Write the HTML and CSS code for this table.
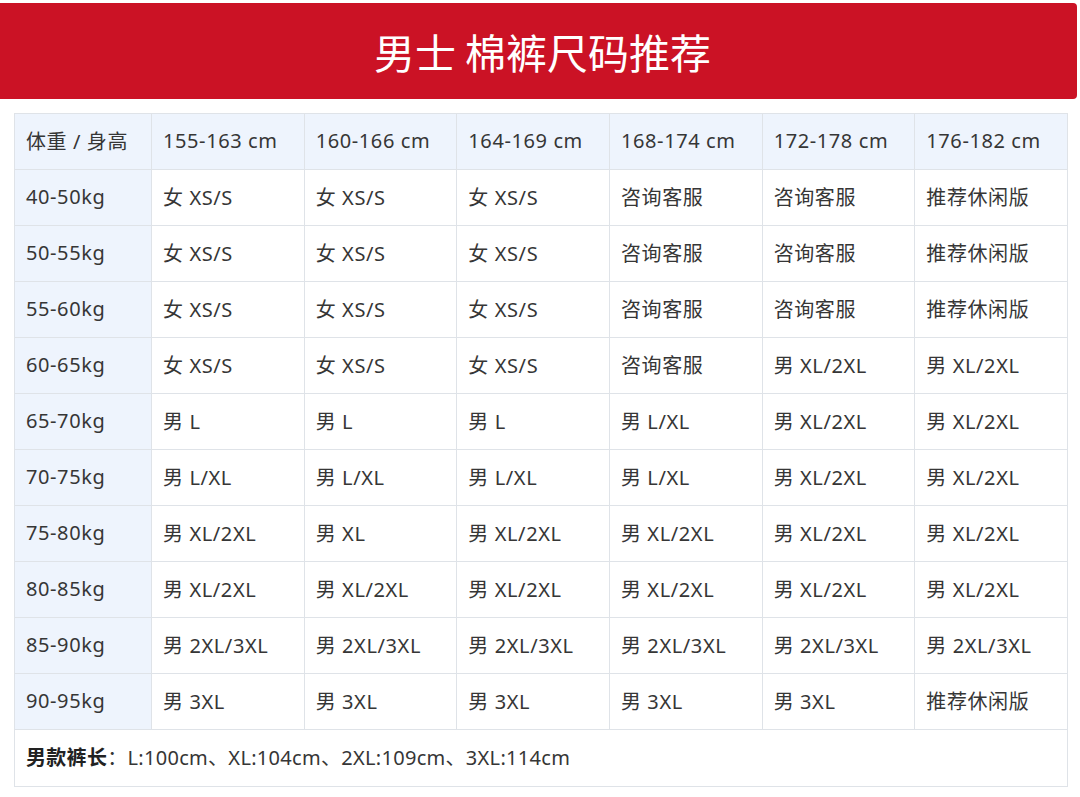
FILE: index.html
```html
<!DOCTYPE html>
<html lang="zh">
<head>
<meta charset="utf-8">
<title>男士 棉裤尺码推荐</title>
<link rel="stylesheet" href="styles.css">
</head>
<body>
<header class="banner"><h1 class="banner-title">男士 棉裤尺码推荐</h1></header>
<div class="table-wrap">
<table class="size-table">
<colgroup><col class="col-first"><col><col><col><col><col><col></colgroup>
<thead>
<tr><th class="first">体重 / 身高</th><th>155-163 cm</th><th>160-166 cm</th><th>164-169 cm</th><th>168-174 cm</th><th>172-178 cm</th><th>176-182 cm</th></tr>
</thead>
<tbody>
<tr><th class="first">40-50kg</th><td>女 XS/S</td><td>女 XS/S</td><td>女 XS/S</td><td>咨询客服</td><td>咨询客服</td><td>推荐休闲版</td></tr>
<tr><th class="first">50-55kg</th><td>女 XS/S</td><td>女 XS/S</td><td>女 XS/S</td><td>咨询客服</td><td>咨询客服</td><td>推荐休闲版</td></tr>
<tr><th class="first">55-60kg</th><td>女 XS/S</td><td>女 XS/S</td><td>女 XS/S</td><td>咨询客服</td><td>咨询客服</td><td>推荐休闲版</td></tr>
<tr><th class="first">60-65kg</th><td>女 XS/S</td><td>女 XS/S</td><td>女 XS/S</td><td>咨询客服</td><td>男 XL/2XL</td><td>男 XL/2XL</td></tr>
<tr><th class="first">65-70kg</th><td>男 L</td><td>男 L</td><td>男 L</td><td>男 L/XL</td><td>男 XL/2XL</td><td>男 XL/2XL</td></tr>
<tr><th class="first">70-75kg</th><td>男 L/XL</td><td>男 L/XL</td><td>男 L/XL</td><td>男 L/XL</td><td>男 XL/2XL</td><td>男 XL/2XL</td></tr>
<tr><th class="first">75-80kg</th><td>男 XL/2XL</td><td>男 XL</td><td>男 XL/2XL</td><td>男 XL/2XL</td><td>男 XL/2XL</td><td>男 XL/2XL</td></tr>
<tr><th class="first">80-85kg</th><td>男 XL/2XL</td><td>男 XL/2XL</td><td>男 XL/2XL</td><td>男 XL/2XL</td><td>男 XL/2XL</td><td>男 XL/2XL</td></tr>
<tr><th class="first">85-90kg</th><td>男 2XL/3XL</td><td>男 2XL/3XL</td><td>男 2XL/3XL</td><td>男 2XL/3XL</td><td>男 2XL/3XL</td><td>男 2XL/3XL</td></tr>
<tr><th class="first">90-95kg</th><td>男 3XL</td><td>男 3XL</td><td>男 3XL</td><td>男 3XL</td><td>男 3XL</td><td>推荐休闲版</td></tr>
</tbody>
<tfoot>
<tr><td class="note" colspan="7"><strong>男款裤长</strong>：L:100cm、XL:104cm、2XL:109cm、3XL:114cm</td></tr>
</tfoot>
</table>
</div>
</body>
</html>
```

FILE: styles.css
```css
html, body {
  margin: 0;
  padding: 0;
  background: #ffffff;
}
body {
  font-family: "Noto Sans", "Noto Sans CJK SC", sans-serif;
  color: #363636;
}
.banner {
  margin-top: 3px;
  width: 1077px;
  height: 96px;
  background: #cb1225;
  border-radius: 0 4px 4px 0;
  display: flex;
  align-items: center;
  justify-content: center;
  padding-left: 8px;
  box-sizing: border-box;
}
.banner-title {
  margin: 0;
  color: #ffffff;
  font-family: "Noto Sans CJK SC", sans-serif;
  font-weight: 400;
  font-size: 41px;
  line-height: 1;
}
.table-wrap {
  margin: 14px 0 0 14px;
  width: 1054px;
}
.size-table {
  width: 1054px;
  table-layout: fixed;
  border-collapse: collapse;
  font-size: 20px;
  letter-spacing: 0.6px;
}
.col-first {
  width: 137px;
}
.size-table th,
.size-table td {
  border: 1px solid #dfe3e8;
  height: 56px;
  padding: 0 0 2px 11px;
  text-align: left;
  font-weight: 400;
  vertical-align: middle;
  white-space: nowrap;
  box-sizing: border-box;
}
.size-table thead th {
  background: #eef4fd;
}
.size-table th.first {
  background: #eef4fd;
}
.size-table td.note {
  height: 57px;
  padding-bottom: 4px;
  font-size: 20px;
  letter-spacing: 0.3px;
  background: #ffffff;
}
.note strong {
  font-weight: 700;
  color: #222222;
}
```
